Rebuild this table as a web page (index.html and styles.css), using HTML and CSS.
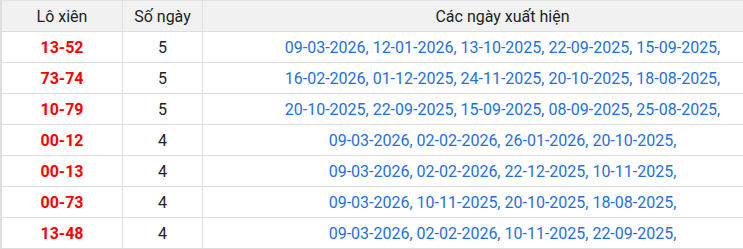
FILE: index.html
```html
<!DOCTYPE html>
<html lang="vi">
<head>
<meta charset="utf-8">
<title>Lô xiên</title>
<link rel="stylesheet" href="styles.css">
</head>
<body>
<div class="wrap">
<table class="lx">
  <colgroup>
    <col class="c1"><col class="c2"><col class="c3">
  </colgroup>
  <thead>
    <tr><th>Lô xiên</th><th>Số ngày</th><th>Các ngày xuất hiện</th></tr>
  </thead>
  <tbody>
    <tr><td class="pair">13-52</td><td>5</td><td class="dates">09-03-2026, 12-01-2026, 13-10-2025, 22-09-2025, 15-09-2025,</td></tr>
    <tr><td class="pair">73-74</td><td>5</td><td class="dates">16-02-2026, 01-12-2025, 24-11-2025, 20-10-2025, 18-08-2025,</td></tr>
    <tr><td class="pair">10-79</td><td>5</td><td class="dates">20-10-2025, 22-09-2025, 15-09-2025, 08-09-2025, 25-08-2025,</td></tr>
    <tr><td class="pair">00-12</td><td>4</td><td class="dates">09-03-2026, 02-02-2026, 26-01-2026, 20-10-2025,</td></tr>
    <tr><td class="pair">00-13</td><td>4</td><td class="dates">09-03-2026, 02-02-2026, 22-12-2025, 10-11-2025,</td></tr>
    <tr><td class="pair">00-73</td><td>4</td><td class="dates">09-03-2026, 10-11-2025, 20-10-2025, 18-08-2025,</td></tr>
    <tr><td class="pair">13-48</td><td>4</td><td class="dates">09-03-2026, 02-02-2026, 10-11-2025, 22-09-2025,</td></tr>
  </tbody>
</table>
</div>
</body>
</html>
```
FILE: styles.css
```css
html, body {
  margin: 0;
  padding: 0;
  background: #fff;
}
.wrap {
  width: 743px;
  overflow: hidden;
}
.lx {
  border-collapse: separate;
  border-spacing: 0;
  table-layout: fixed;
  width: 803px;
  font-family: Roboto, "Liberation Sans", sans-serif;
  font-size: 16px;
  color: #222;
}
.c1 { width: 123px; }
.c2 { width: 80px; }
.c3 { width: 600px; }
.lx th, .lx td {
  box-sizing: border-box;
  padding: 0;
  text-align: center;
  white-space: nowrap;
  border-right: 1px solid #dddddd;
  border-bottom: 1px solid #dddddd;
  vertical-align: middle;
}
.lx th {
  height: 32px;
  background: #f1f1f1;
  font-weight: normal;
  border-top: 1px solid #e6e6e6;
}
.lx td { height: 31px; }
.lx th:first-child, .lx td:first-child {
  border-left: 2px solid #dddddd;
}
.pair {
  color: #ff0000;
  font-weight: bold;
}
.dates {
  color: #1f6fde;
}
```
